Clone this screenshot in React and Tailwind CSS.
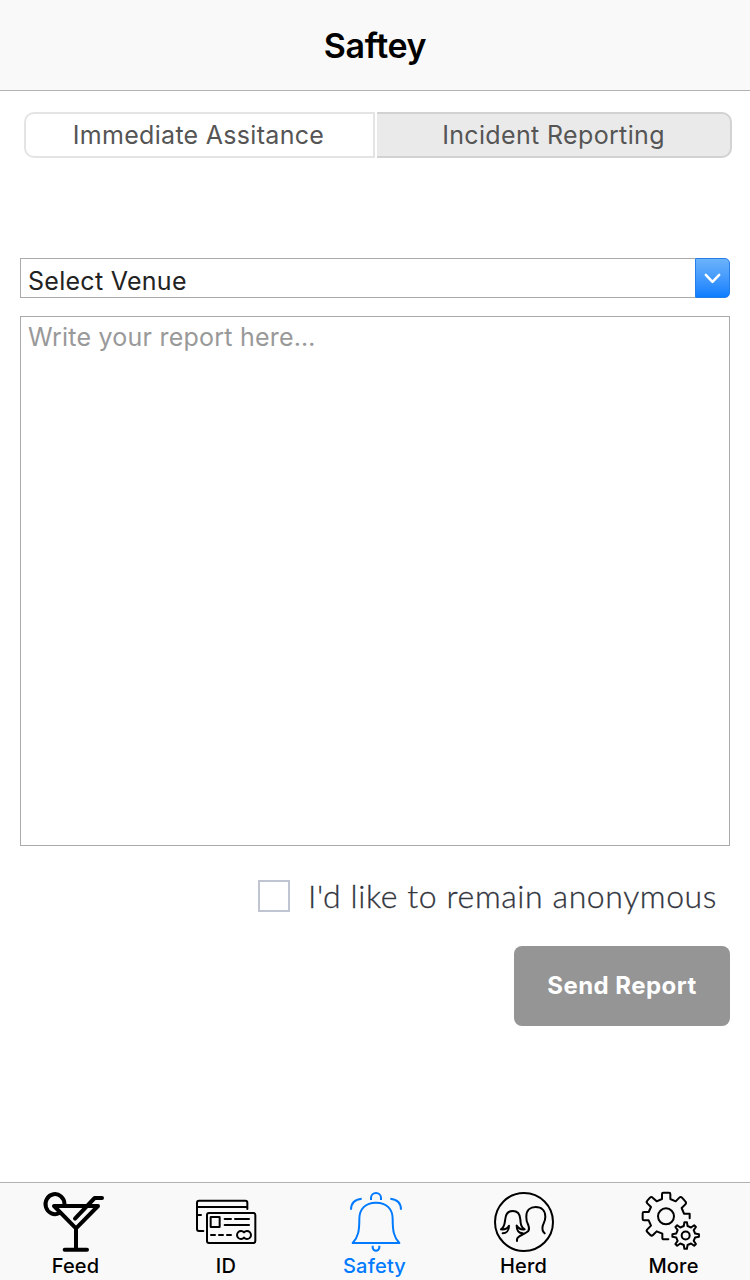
import React from "react";

function gearPath(cx, cy, outer, root, teeth) {
  const step = (Math.PI * 2) / teeth;
  const points = [];
  for (let i = 0; i < teeth; i++) {
    const a = i * step - Math.PI / 2;
    [
      [root, -0.25],
      [outer, -0.12],
      [outer, 0.12],
      [root, 0.25],
    ].forEach(([r, t]) => {
      const angle = a + t * step;
      points.push(`${(cx + r * Math.cos(angle)).toFixed(1)} ${(cy + r * Math.sin(angle)).toFixed(1)}`);
    });
  }
  return `M${points.join("L")}Z`;
}

function TabIcon({ strokeWidth, children }) {
  return (
    <svg
      className="h-16 w-[72px] shrink-0"
      viewBox="57 42 216 192"
      fill="none"
      stroke="currentColor"
      strokeWidth={strokeWidth}
      strokeLinecap="round"
      strokeLinejoin="round"
      aria-hidden="true"
    >
      {children}
    </svg>
  );
}

function CocktailIcon() {
  return (
    <TabIcon strokeWidth="12">
      <path d="M133.5 84A28.5 30 0 1 0 118 111" />
      <path d="M102 90H234L168 157ZM168 157V221M134 221H201M165 128L224 66H246" />
    </TabIcon>
  );
}

function CardsIcon() {
  return (
    <TabIcon strokeWidth="6">
      <path d="M232 99V80Q232 74 226 74H87Q81 74 81 80V159Q81 165 87 165H100M82 93H231M82 117H93" />
      <rect x="111" y="111" width="145" height="90" rx="6" />
      <rect x="122" y="123" width="27" height="30" rx="1" />
      <path d="M164 129H183M195 129H237M164 147H237M123 177H135M147 177H159M171 177H183" />
      <path d="M222 169A12 12 0 1 0 222 185M222 169A12 12 0 1 1 222 185" />
    </TabIcon>
  );
}

function BellIcon() {
  return (
    <TabIcon strokeWidth="6">
      <path d="M168 80C136 80 118 99 118 129C118 164 115 183 98 201H238C221 183 218 164 218 129C218 99 200 80 168 80Z" />
      <path strokeLinecap="butt" d="M153 72V66A15 15 0 0 1 183 66V72M158 209V214A10 10 0 0 0 178 214V209M93 101Q93 71 125 68M243 101Q243 71 211 68" />
    </TabIcon>
  );
}

function HerdIcon() {
  return (
    <TabIcon strokeWidth="6">
      <circle cx="162" cy="138" r="87" />
      <path d="M98 172C109 172 117 163 117 149C112 158 104 161 93 160C105 153 104 139 106 128C108 112 115 105 128 105C143 105 150 114 151 130C152 145 153 154 164 160C154 162 146 158 140 149C140 162 146 171 158 172" />
      <path d="M141 195V190C143 178 165 175 175 165C180 158 176 151 174 145C168 136 169 126 169 121C169 103 180 93 197 93C215 93 226 104 226 122C226 137 219 143 218 151C216 160 219 168 224 172" />
    </TabIcon>
  );
}

function GearsIcon() {
  return (
    <TabIcon strokeWidth="6">
      <path d="M209 127V113H192L185 96L196 85Q200 80 196 76L186 65Q182 61 178 65L167 76L151 69V54Q151 50 147 50H130Q126 50 126 54V69L110 76L98 65Q94 61 90 65L82 74Q78 78 82 82L93 93L86 108H72Q68 108 68 112V129Q68 133 72 133H86L93 149L82 160Q78 164 82 168L91 177Q95 181 99 177L110 166L127 173V185Q127 190 132 190H145" />
      <circle cx="138" cy="121" r="24" />
      <path d={gearPath(197, 178.5, 40, 29, 8)} />
      <circle cx="197" cy="178.5" r="12" />
    </TabIcon>
  );
}

const tabs = [
  { label: "Feed", Icon: CocktailIcon, nudge: "pl-px" },
  { label: "ID", Icon: CardsIcon, nudge: "pl-0.5" },
  { label: "Safety", Icon: BellIcon, active: true, nudge: "pr-px" },
  { label: "Herd", Icon: HerdIcon, nudge: "pr-[3px]" },
  { label: "More", Icon: GearsIcon, nudge: "pr-[3px]" },
];

export default function App() {
  return (
    <div className="flex h-[1280px] w-[750px] flex-col overflow-hidden bg-white font-['Inter',sans-serif]">
      <header className="flex h-[91px] shrink-0 items-center justify-center border-b border-[#b2b2b2] bg-[#f9f9f9] pt-0.5">
        <h1 className="text-[34px] leading-10 font-semibold tracking-[-0.4px] text-black">Saftey</h1>
      </header>

      <main className="flex flex-1 flex-col px-5">
        <div className="mt-[21px] ml-1 flex h-[46px] w-[708px] shrink-0 text-[25px] text-[#555]">
          <button className="w-[351px] rounded-l-[10px] border-2 border-[#e4e4e4] bg-white pt-0.5 pr-0.5 tracking-[0.3px]">
            Immediate Assitance
          </button>
          <button className="ml-0.5 w-[355px] rounded-r-[10px] border-y-2 border-r-2 border-[#d2d2d2] bg-[#eaeaea] pt-0.5 tracking-[0.35px]">
            Incident Reporting
          </button>
        </div>

        <div className="mt-[100px] flex h-10 shrink-0">
          <div className="flex flex-1 items-center border border-r-0 border-[#aaa] pt-[5px] pl-[7px] text-[25px] leading-8 tracking-[0.28px] text-[#222]">
            Select Venue
          </div>
          <button
            aria-label="Open venue list"
            className="flex w-[35px] items-center justify-center rounded-r-[5px] border border-[#267ee9] bg-linear-to-b from-[#6bb3fa] to-[#087eff]"
          >
            <svg className="h-5 w-5" viewBox="0 0 20 20" fill="none" stroke="white" strokeWidth="2.5" strokeLinecap="round" strokeLinejoin="round">
              <path d="M2.8 6.8L9.5 13.8L16.2 6.8" />
            </svg>
          </button>
        </div>

        <div className="mt-[18px] h-[530px] shrink-0 border border-[#aaa] pt-0.5 pl-[7px] text-[25px] leading-9 tracking-[0.23px] text-[#999]">
          Write your report here…
        </div>

        <label className="mt-[34px] flex h-8 shrink-0 items-center justify-end pr-[13px]">
          <span className="h-8 w-8 border-2 border-[#bfc4d0]" />
          <span className="ml-[18px] font-['Lato',sans-serif] text-[32px] leading-8 font-light tracking-[0.6px] whitespace-nowrap text-[#32353d] [-webkit-text-stroke:0.3px_#32353d]">
            I'd like to remain anonymous
          </span>
        </label>

        <button className="mt-[34px] h-20 w-[216px] shrink-0 self-end rounded-lg bg-[#959595] text-[24px] font-bold tracking-[0.45px] text-white">
          Send Report
        </button>
      </main>

      <nav className="flex h-[98px] shrink-0 border-t border-[#b2b2b2] bg-[#f9f9f9]">
        {tabs.map(({ label, Icon, active, nudge }) => (
          <button
            key={label}
            className={`flex w-[150px] flex-col items-center pt-[7px] ${active ? "text-[#007aff]" : "text-black"}`}
          >
            <Icon />
            <span className={`text-[20px] leading-6 font-medium tracking-[0.2px] ${nudge}`}>{label}</span>
          </button>
        ))}
      </nav>
    </div>
  );
}
